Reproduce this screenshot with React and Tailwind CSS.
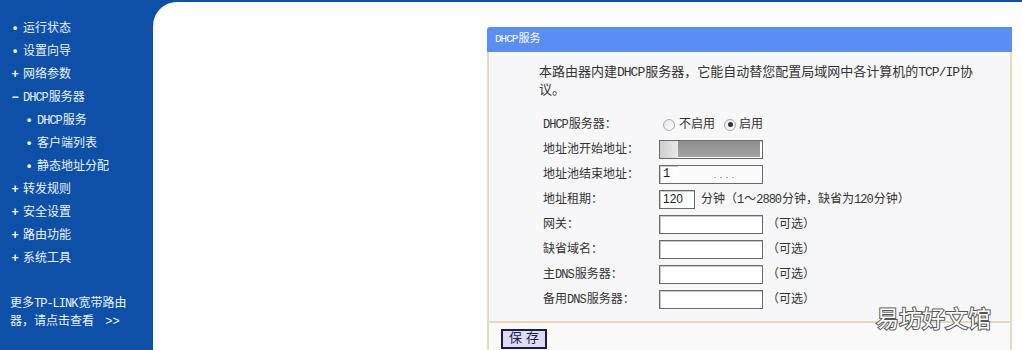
import React from "react";

const CN = "font-['Liberation_Mono','Noto_Sans_CJK_SC',sans-serif]";

function En({ children }) {
  return <span className="tracking-[-1px] pr-[1px]">{children}</span>;
}

const MENU = [
  { mark: "•", text: "运行状态" },
  { mark: "•", text: "设置向导" },
  { mark: "+", text: "网络参数" },
  { mark: "−", text: <><En>DHCP</En>服务器</> },
  { mark: "•", text: <><En>DHCP</En>服务</>, sub: true },
  { mark: "•", text: "客户端列表", sub: true },
  { mark: "•", text: "静态地址分配", sub: true },
  { mark: "+", text: "转发规则" },
  { mark: "+", text: "安全设置" },
  { mark: "+", text: "路由功能" },
  { mark: "+", text: "系统工具" },
];

function Input({ w = "w-[104px]", children }) {
  return (
    <div className={`relative h-[19px] ${w} bg-white border border-[#6a6a6a] shadow-[inset_1px_1px_0_#c8c8c8] text-[12px] leading-[17px] px-[3px] text-[#222] overflow-hidden`}>
      {children}
    </div>
  );
}

function Radio({ checked }) {
  return (
    <span className="inline-flex items-center justify-center w-[12px] h-[12px] rounded-full border border-[#a8a8a8] bg-gradient-to-br from-[#e6e6e6] to-white">
      {checked && <span className="w-[5px] h-[5px] rounded-full bg-[#333]" />}
    </span>
  );
}

const Opt = () => <span className="ml-[4px] text-[12px] text-[#333]">（可选）</span>;

const ROWS = [
  {
    label: <><En>DHCP</En>服务器：</>,
    field: (
      <div className="flex items-center text-[12px] text-[#333]">
        <span className="ml-[4px] flex"><Radio /></span>
        <span className="ml-[4px]">不启用</span>
        <span className="ml-[9px] flex"><Radio checked /></span>
        <span className="ml-[3px]">启用</span>
      </div>
    ),
  },
  {
    label: "地址池开始地址：",
    field: (
      <Input>
        <div className="absolute left-[18px] top-0 w-[82px] h-[16px] bg-gradient-to-b from-[#8e8e8e] to-[#a4a4a4]" />
        <div className="absolute left-0 top-0 w-[18px] h-[17px] bg-gradient-to-r from-[#cfcfcf] to-[#e8e8e8]" />
      </Input>
    ),
  },
  {
    label: "地址池结束地址：",
    field: (
      <Input>
        1
        <div className="absolute left-[18px] top-0 w-[84px] h-[17px] bg-[#fbfbfb]" />
        <div className="absolute left-[54px] top-[11px] flex gap-[4px]">
          <span className="w-[2px] h-[1px] bg-[#b0b0b0]" />
          <span className="w-[2px] h-[1px] bg-[#b0b0b0]" />
          <span className="w-[2px] h-[1px] bg-[#b0b0b0]" />
          <span className="w-[2px] h-[1px] bg-[#b0b0b0]" />
        </div>
      </Input>
    ),
  },
  {
    label: "地址租期：",
    field: (
      <div className="flex items-center">
        <Input w="w-[36px]"><span className="font-['Liberation_Sans',sans-serif]">120</span></Input>
        <span className="ml-[6px] text-[12px] text-[#333]">
          分钟（<En>1</En>～<En>2880</En>分钟，缺省为<En>120</En>分钟）
        </span>
      </div>
    ),
  },
  { label: "网关：", field: <div className="flex items-center"><Input /><Opt /></div> },
  { label: "缺省域名：", field: <div className="flex items-center"><Input /><Opt /></div> },
  { label: <>主<En>DNS</En>服务器：</>, field: <div className="flex items-center"><Input /><Opt /></div> },
  { label: <>备用<En>DNS</En>服务器：</>, field: <div className="flex items-center"><Input /><Opt /></div> },
];

export default function App() {
  return (
    <div className={`relative w-[1022px] h-[350px] flex overflow-hidden bg-[#0c50a8] ${CN}`}>
      {/* sidebar */}
      <div className="w-[153px] shrink-0 flex flex-col pt-[17px] text-[12px] text-[#eef3ff]">
        {MENU.map((m, i) => (
          <div key={i} className={`flex items-center h-[23px] ${m.sub ? "pl-[25px]" : "pl-[11px]"}`}>
            <span className="w-[8px] text-center font-bold text-white">{m.mark}</span>
            <span className="ml-[4px]">{m.text}</span>
          </div>
        ))}
        <div className="mt-[25px] pl-[10px] leading-[18px]">
          <div>更多<En>TP-LINK</En>宽带路由</div>
          <div>器，请点击查看 <span className="ml-[4px]">&gt;&gt;</span></div>
        </div>
      </div>

      {/* main */}
      <div className="flex-1 mt-[2px] bg-[#fefefe] rounded-tl-[24px] pl-[334px] pt-[25px]">
        <div className="w-[525px] flex flex-col h-full">
          <div className="h-[25px] bg-[#5a8ef0] rounded-tl-[3px] flex items-center pl-[8px] text-[11px] text-white">
            <En>DHCP</En>服务
          </div>
          <div className="bg-[#f7f7fa] border-x-2 border-b-2 border-[#e8dab8] pl-[50px] pt-[12px] pb-[9px]">
            <p className="text-[13px] leading-[18px] text-[#333] whitespace-nowrap">
              本路由器内建<En>DHCP</En>服务器，它能自动替您配置局域网中各计算机的<En>TCP/IP</En>协
              <br />
              议。
            </p>
            <div className="mt-[12px] pl-[4px] flex flex-col">
              {ROWS.map((r, i) => (
                <div key={i} className="flex items-center h-[25px]">
                  <div className="w-[116px] text-[12px] text-[#333]">{r.label}</div>
                  {r.field}
                </div>
              ))}
            </div>
          </div>
          <div className="flex-1 bg-[#f9f9fa] border-x-2 border-[#e8dab8] pl-[12px] pt-[3px]">
            <button className="h-[20px] w-[46px] border-2 border-[#1c1c4a] bg-[#dedcf2] text-[13px] leading-[14px] text-[#1c1c4a] tracking-[4px] pl-[4px]">
              保存
            </button>
          </div>
        </div>
      </div>

      {/* watermark */}
      <div className="absolute left-[876px] top-[303px] text-[23px] leading-[28px] text-white font-['Noto_Sans_CJK_SC',sans-serif] [-webkit-text-stroke:2px_#555] [paint-order:stroke_fill]">
        易坊好文馆
      </div>
    </div>
  );
}
